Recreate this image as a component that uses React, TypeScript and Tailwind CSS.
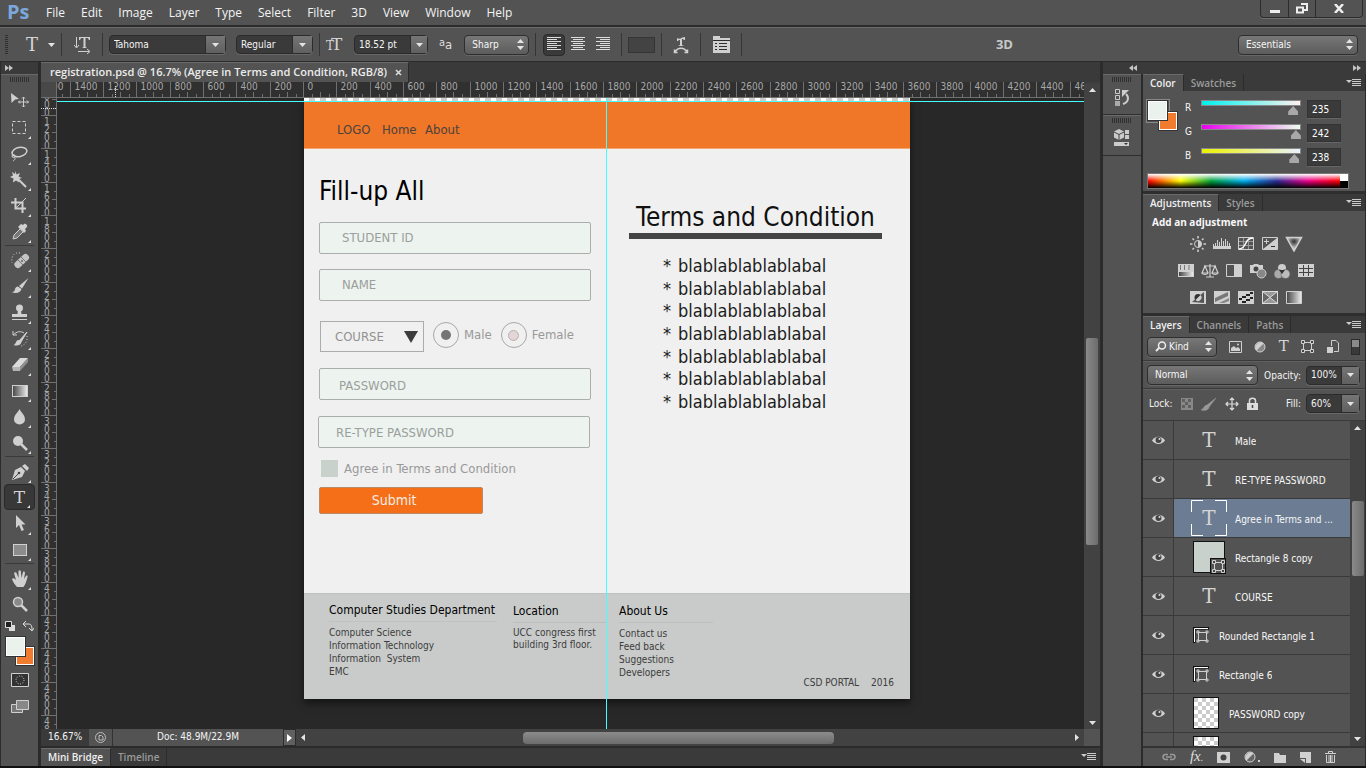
import type { ReactNode } from "react";

const MENUS = ["File", "Edit", "Image", "Layer", "Type", "Select", "Filter", "3D", "View", "Window", "Help"];

/* ---------- shared drawing helpers ---------- */

function Svg({ w = 24, h = 24, children, className = "" }: { w?: number; h?: number; children: ReactNode; className?: string }) {
  return (
    <svg width={w} height={h} viewBox={`0 0 ${w} ${h}`} fill="none" aria-hidden="true" className={`shrink-0 ${className}`}>
      {children}
    </svg>
  );
}

const L = "#d0d0d0";
const D = "#2e2e2e";

function TypeGlyph({ className = "text-[18px]" }: { className?: string }) {
  return <span className={`font-['DejaVu_Serif',serif] leading-none text-[#d4d4d4] ${className}`}>T</span>;
}

function DownArrow() {
  return <Svg w={7} h={4}><path d="M0 0h7L3.500 4z" fill="#e4e4e4" /></Svg>;
}

function UpDown() {
  return <Svg w={7} h={11}><path d="M3.500 0L7 4H0zM0 7h7L3.500 11z" fill="#e4e4e4" /></Svg>;
}

function Grip({ className = "" }: { className?: string }) {
  return (
    <Svg w={20} h={5} className={className}>
      {Array.from({ length: 10 }, (_, i) => <path key={i} d={`M${i * 2 + 0.5} 0v5`} stroke="#303030" />)}
    </Svg>
  );
}

function DoubleChevron({ left = false }: { left?: boolean }) {
  return (
    <Svg w={8} h={6}>
      <path d={left ? "M4 0v6L0 3zM8 0v6L4 3z" : "M0 0v6l4-3zM4 0v6l4-3z"} fill="#c4c4c4" />
    </Svg>
  );
}

function PanelMenu() {
  return (
    <button aria-label="Panel menu" className="mr-1 ml-auto flex items-center">
      <Svg w={15} h={10}>
        <path d="M0 2h6L3 5z" fill="#ccc" />
        <path d="M6 1.500h9M6 3.500h9M6 5.500h9M6 7.500h9" stroke="#ccc" />
      </Svg>
    </button>
  );
}

/* ---------- form controls of the options bar and panels ---------- */

function Combo({ value, label, className, arrow = "w-[20px]" }: { value: string; label: string; className: string; arrow?: string }) {
  return (
    <div className={`flex h-[19px] items-stretch rounded-sm border border-[#2b2b2b] bg-[#3a3a3a] shadow-[0_1px_0_#676767] ${className}`}>
      <select aria-label={label} className="min-w-0 flex-1 appearance-none bg-transparent pl-1 text-[10px] leading-4 text-[#f4f4f4] outline-none">
        <option>{value}</option>
      </select>
      <span className={`flex items-center justify-center border-l border-[#2b2b2b] bg-linear-to-b from-[#757575] to-[#606060] ${arrow}`}>
        <DownArrow />
      </span>
    </div>
  );
}

function Stepper({ value, label, className, icon }: { value: string; label: string; className: string; icon?: ReactNode }) {
  return (
    <div className={`flex h-5 items-center rounded-sm border border-[#2e2e2e] bg-linear-to-b from-[#777] to-[#5c5c5c] pr-1 pl-[7px] shadow-[0_1px_0_#676767] ${className}`}>
      {icon}
      <select aria-label={label} className="min-w-0 flex-1 appearance-none bg-transparent text-[10px] leading-4 text-[#f6f6f6] outline-none">
        <option>{value}</option>
      </select>
      <UpDown />
    </div>
  );
}

/* ---------- top bars ---------- */

function MenuBar() {
  return (
    <header className="flex h-[27px] shrink-0 items-start border-b-2 border-[#2c2c2c] bg-[#535353] pl-[7px]">
      <div className="w-[30px] font-['Open_Sans',sans-serif] text-[20px] leading-[24px] font-bold text-[#7ba7db]">Ps</div>
      <nav className="flex gap-4 pl-[9px] font-['Open_Sans',sans-serif] text-[12px] leading-[26px] text-[#f4f4f4]">
        {MENUS.map((m) => <button key={m}>{m}</button>)}
      </nav>
      <div className="mr-[3px] ml-auto flex h-[18px] rounded-b-sm border border-t-0 border-[#2c2c2c] shadow-[0_1px_0_#707070]">
        <button aria-label="Minimize" className="flex w-7 items-center justify-center border-r border-[#2c2c2c]">
          <Svg w={10} h={10}><path d="M0 6h10v3H0z" fill="#eee" /></Svg>
        </button>
        <button aria-label="Restore" className="flex w-[27px] items-center justify-center border-r border-[#2c2c2c]">
          <Svg w={12} h={11}><path d="M5 1h6v6H8M1 4.500h6v5H1z" stroke="#eee" strokeWidth="2" /></Svg>
        </button>
        <button aria-label="Close" className="flex w-[46px] items-center justify-center">
          <Svg w={10} h={9}><path d="M1 0l8 9M9 0L1 9" stroke="#eee" strokeWidth="2.500" /></Svg>
        </button>
      </div>
    </header>
  );
}

function Sep() {
  return <div className="h-[23px] w-px shrink-0 bg-[#353535]" />;
}

function AlignIcon({ kind }: { kind: "left" | "center" | "right" }) {
  return (
    <Svg w={15} h={15}>
      {Array.from({ length: 7 }, (_, i) => {
        const len = i % 2 ? 10 : 14;
        const x = kind === "left" ? 0 : kind === "center" ? (14 - len) / 2 : 14 - len;
        return <path key={i} d={`M${x} ${i * 2 + 0.5}h${len}`} stroke="#dcdcdc" />;
      })}
    </Svg>
  );
}

function OptionsBar() {
  return (
    <div className="flex h-[34px] shrink-0 items-center border-t border-[#6a6a6a] bg-[#535353] pr-[8px] pl-[5px]">
      <Svg w={5} h={20}>
        {Array.from({ length: 10 }, (_, i) => <path key={i} d={`M0 ${i * 2 + 0.5}h3`} stroke="#303030" />)}
      </Svg>
      <button aria-label="Type tool preset" className="ml-4 flex w-[32px] items-center gap-[10px]">
        <TypeGlyph /><DownArrow />
      </button>
      <div className="w-[3px]" />
      <Sep />
      <button aria-label="Toggle text orientation" className="ml-3 w-[28px]">
        <Svg w={18} h={18}>
          <path d="M2.500 1v10M0 9l2.500 3L5 9M4 15.500h11M13 13l3 2.500-3 2.500" stroke={L} />
          <path d="M5 1h11v3h-1l-1-2h-2.500v9l1.500 1H8l1.500-1V2H7L6 4H5z" fill={L} />
        </Svg>
      </button>
      <Sep />
      <Combo label="Font family" value="Tahoma" className="ml-[6px] w-[117px]" />
      <Combo label="Font style" value="Regular" className="ml-[10px] w-[77px]" />
      <div className="w-[6px]" />
      <Sep />
      <div className="ml-[6px] flex w-[22px] items-baseline">
        <TypeGlyph className="text-[12px] text-[#aaa]" /><TypeGlyph className="-ml-[3px] text-[17px]" />
      </div>
      <Combo label="Font size" value="18.52 pt" className="ml-[6px] w-[74px]" arrow="w-[17px]" />
      <div className="ml-[11px] flex items-end text-[13px] leading-4 text-[#ddd]">
        <span className="pb-1 text-[11px] leading-3">a</span><span>a</span>
      </div>
      <Stepper label="Anti-aliasing" value="Sharp" className="ml-3 w-[65px]" />
      <div className="w-[6px]" />
      <Sep />
      <div className="ml-[7px] flex gap-[1px]">
        <button aria-label="Left align text" className="flex h-[22px] w-[22px] items-center justify-center rounded-sm border border-[#2b2b2b] bg-[#3a3a3a]"><AlignIcon kind="left" /></button>
        <button aria-label="Center text" className="flex h-[22px] w-6 items-center justify-center"><AlignIcon kind="center" /></button>
        <button aria-label="Right align text" className="flex h-[22px] w-6 items-center justify-center"><AlignIcon kind="right" /></button>
      </div>
      <div className="w-[6px]" />
      <Sep />
      <button aria-label="Text color" className="mx-[6px] h-4 w-[27px] border border-[#353535] bg-[#434343]" />
      <Sep />
      <button aria-label="Warp text" className="mx-[11px] w-4">
        <Svg w={16} h={18}>
          <path d="M4 2c3 2 5-1 8-1v3h-1c-.5-1-1-1-2-1v6l2 1H5l2-1V4C6 4 5.500 4 5 5H4z" fill={L} />
          <path d="M2 16c3-5 9-5 12 0M1.500 13.500v3h3M14.500 13.500v3h-3" stroke={L} strokeWidth="1.500" />
        </Svg>
      </button>
      <Sep />
      <button aria-label="Toggle Character and Paragraph panels" className="mx-[12px] w-4">
        <Svg w={17} h={17}>
          <path d="M0 0h7v2h10v15H0z" fill={L} />
          <path d="M0 4.500h17M2 7.500h2m2 0h8M2 10.500h2m2 0h8M2 13.500h2m2 0h8" stroke={D} />
        </Svg>
      </button>
      <Sep />
      <button aria-label="3D" className="ml-auto font-['Open_Sans',sans-serif] text-[13px] font-bold text-[#c8c8c8]">3D</button>
      <Stepper label="Workspace" value="Essentials" className="ml-[225px] w-[120px]" />
    </div>
  );
}

/* ---------- tool box ---------- */

type Tool = { name: string; icon: ReactNode; fly?: boolean; active?: boolean };

const G1: Tool[] = [
  { name: "Move", fly: false, icon: <><path d="M3 4l8 6-4 .5L3.500 14z" fill={L} /><path d="M15.500 8v10M10.500 13h10M14 9.500l1.500-1.500L17 9.500M14 16.500l1.500 1.500 1.500-1.500M12 11.500L10.500 13l1.500 1.500M19 11.500l1.500 1.500-1.500 1.500" stroke={L} /></> },
  { name: "Rectangular Marquee", icon: <rect x="4.500" y="6.500" width="13" height="12" stroke={L} strokeDasharray="3 2" /> },
  { name: "Lasso", icon: <><ellipse cx="11.500" cy="11" rx="7.500" ry="4.500" transform="rotate(-12 11.500 11)" stroke={L} strokeWidth="1.500" /><circle cx="5.500" cy="15" r="1.500" stroke={L} /><path d="M6 16c2 1 1 3-1 4" stroke={L} /></> },
  { name: "Magic Wand", icon: <><path d="M7.500 4l1 3.500L12 6l-1.500 3.500L14 11l-3.500 1 .5 3.500-3-2-3 2 .5-4L2 10l3-1.500L4 5l3 2z" fill={L} /><path d="M10 12l8 8" stroke={L} strokeWidth="2" /></> },
  { name: "Crop", icon: <><path d="M7.500 5v10.500H18M3 9.500h11.500V20" stroke={L} strokeWidth="2" /><path d="M8 15L18 5" stroke={L} /></> },
  { name: "Eyedropper", icon: <><path d="M13 9l3 3-7 7-4 1 1-4z" stroke={L} fill="#777" /><path d="M13 5l2 1 1-1c1-1 4 1 3 3l-2 2 1 2-2 2-6-6z" fill={L} /></> },
];
const G2: Tool[] = [
  { name: "Spot Healing Brush", icon: <><rect x="5" y="10" width="17" height="7" rx="3" transform="rotate(-43 13 13)" fill="#c4c4c4" /><path d="M10 12l5 5M13 9l5 5" stroke="#777" /><path d="M12 5C6 4 3 8 4 15" stroke={L} strokeDasharray="1 2" /><circle cx="14" cy="13" r="1" fill="#666" /></> },
  { name: "Brush", icon: <><path d="M20.500 4L14 14.500 11 12z" fill={L} /><path d="M10 12.500l3.500 2.500c-1 4-6 5-10 3 3 0 3-1 3.500-3 .5-1.500 1.500-2.500 3-2.500z" fill={L} /></> },
  { name: "Clone Stamp", icon: <><circle cx="11.500" cy="8" r="3.500" fill={L} /><path d="M10 10h3l.5 4H19v3H4v-3h5.500z" fill={L} /><path d="M4 19.500h15" stroke={L} /></> },
  { name: "History Brush", icon: <><path d="M19 6l-6 10-2-1z" fill={L} stroke={L} /><path d="M10.500 14l3 2c-1 4-5 4-8 3 3-1 2-5 5-5z" fill={L} /><path d="M5 9c4-4 8-4 11-2M5 5v4h4" stroke={L} /><path d="M19 10c1 5-2 9-6 10" stroke={L} strokeDasharray="1 2" /></> },
  { name: "Eraser", icon: <><path d="M4 15l8-9h8l-8 9z" fill="#dadada" /><path d="M4 15h8v4H5z" fill="#b4b4b4" /><path d="M12 15l8-9v4l-8 9z" fill="#909090" /></> },
  { name: "Gradient", icon: <rect x="4.500" y="7.500" width="15" height="11" fill="url(#tool-gradient)" stroke={L} /> },
  { name: "Blur", icon: <path d="M11.500 5c2 4 5.500 6 5.500 10.500a5.500 5 0 0 1-11 0C6 11 9.500 9 11.500 5z" fill={L} /> },
  { name: "Dodge", icon: <><circle cx="10" cy="11" r="5" fill={L} /><path d="M13 14l6 6" stroke={L} strokeWidth="2.500" /></> },
];
const G3: Tool[] = [
  { name: "Pen", icon: <><path d="M4 21l3-10 6-3 4 4-3 6z" fill={L} /><path d="M5 20l6-6" stroke="#444" /><circle cx="11" cy="14" r="1.300" fill="#444" /><path d="M14 7l3-2 4 4-2 3z" fill={L} /></> },
  { name: "Horizontal Type", active: true, icon: null },
  { name: "Path Selection", icon: <path d="M8 4v13l3-3 2.500 6 2.500-1-2.500-5.500h4z" fill={L} /> },
  { name: "Rectangle", icon: <rect x="5.500" y="7.500" width="13" height="11" fill="#8c8c8c" stroke={L} /> },
];
const G4: Tool[] = [
  { name: "Hand", icon: <path d="M9 21c-2-2-4-5-5-8 1-1 2-1 4 1L6 7c1-1 2-1 2.500 0l2 5V5c1-1 2-1 2.300 0l.7 7 1.500-6c1-1 2 0 2 1l-1 6 2-3c1-1 2 0 1.500 1-1 4-2 7-4 10z" fill={L} /> },
  { name: "Zoom", fly: false, icon: <><circle cx="10" cy="10" r="4.500" fill="#8a8a8a" stroke={L} strokeWidth="1.500" /><path d="M13 13l6 6" stroke={L} strokeWidth="2.500" /></> },
];

function ToolGroup({ tools }: { tools: Tool[] }) {
  return (
    <div className="flex w-full flex-col items-center">
      {tools.map((t) => (
        <button
          key={t.name}
          aria-label={t.name}
          className={`relative flex h-[26px] w-[31px] items-center justify-center ${t.active ? "rounded-sm border border-[#2a2a2a] bg-[#383838]" : ""}`}
        >
          {t.icon ? <Svg>{t.icon}</Svg> : <TypeGlyph className="text-[17px]" />}
          {t.fly !== false && (
            <Svg w={3} h={3} className="absolute right-1 bottom-px"><path d="M3 0v3H0z" fill="#ddd" /></Svg>
          )}
        </button>
      ))}
    </div>
  );
}

function ToolSep() {
  return <div className="my-px h-px w-[29px] bg-[#3a3a3a]" />;
}

function Swatches({ className = "" }: { className?: string }) {
  return (
    <div className={`relative ${className}`}>
      <div className="absolute right-0 bottom-0 h-[18px] w-[18px] border border-white bg-[#f17c30] outline outline-[#333]" />
      <div className="absolute top-0 left-0 h-[19px] w-[19px] border border-white bg-[#ebf2ee] outline outline-[#333]" />
    </div>
  );
}

function Toolbox() {
  return (
    <aside className="flex w-[37px] shrink-0 flex-col bg-[#535353]">
      <div className="flex h-[12px] items-center bg-[#3a3a3a] pl-1"><DoubleChevron /></div>
      <div className="flex flex-col items-center border-t border-[#6a6a6a]">
        <Grip className="mt-[2px] mb-[6px]" />
        <ToolGroup tools={G1} /><ToolSep />
        <ToolGroup tools={G2} /><ToolSep />
        <ToolGroup tools={G3} /><ToolSep />
        <ToolGroup tools={G4} />
        <div className="mt-1 flex w-[29px] justify-between">
          <Svg w={11} h={11}><path d="M4 4h6v6H4z" fill="#ddd" /><path d="M.5.5h6v6h-6z" fill="#222" stroke="#ddd" /></Svg>
          <Svg w={11} h={11}><path d="M1 3h4c3 0 4 1 4 6M3 0L0 3l3 3M6 7l3 3 2-3" stroke="#ddd" /></Svg>
        </div>
        <Swatches className="mt-[5px] h-[28px] w-[28px]" />
        <button aria-label="Quick mask mode" className="mt-2">
          <Svg w={18} h={14}><path d="M.5.5h17v13H.5z" fill="#333" stroke={L} /><circle cx="9" cy="7" r="4" stroke={L} strokeDasharray="1 1.500" /></Svg>
        </button>
        <button aria-label="Screen mode" className="mt-[13px]">
          <Svg w={18} h={14}><path d="M.5 4.500h11v8H.5z" fill="#777" stroke={L} /><path d="M5.500.5h12v9h-12z" fill="#888" stroke={L} /></Svg>
        </button>
      </div>
    </aside>
  );
}

/* ---------- rulers: one document unit is a sixth of a pixel ---------- */

const STEP = 100 / 3;

function HRuler() {
  const marks = Array.from({ length: 32 }, (_, i) => i - 8);
  return (
    <svg height="15" className="block w-full bg-[#303030] text-[10px]" role="img" aria-label="Horizontal ruler">
      {marks.map((i) => {
        const x = Math.round(247 + i * STEP) - 0.5;
        return (
          <g key={i}>
            <path d={`M${x} 0v15M${Math.round(x + STEP / 4) + 0.5} 12v3M${Math.round(x + STEP / 2) + 0.5} 10v5M${Math.round(x + (STEP * 3) / 4) + 0.5} 12v3`} stroke="#707070" />
            <text x={x + 4} y="8" fill="#a8a8a8">{Math.abs(i * 200)}</text>
          </g>
        );
      })}
      <path d="M58.500 4v11" stroke="#ddd" strokeDasharray="1 1" />
    </svg>
  );
}

function VRuler() {
  const marks = Array.from({ length: 20 }, (_, i) => i + 5);
  return (
    <svg width="16" className="block h-full bg-[#303030] text-[10px]" role="img" aria-label="Vertical ruler">
      {marks.map((i) => {
        const y = Math.round(17 + (i - 6) * STEP) + 0.5;
        return (
          <g key={i}>
            <path d={`M0 ${y}h16M13 ${Math.round(y + STEP / 4) + 0.5}h3M11 ${Math.round(y + STEP / 2) + 0.5}h5M13 ${Math.round(y + (STEP * 3) / 4) + 0.5}h3`} stroke="#707070" />
            {String(i * 200).split("").map((c, k) => (
              <text key={k} x="3" y={y + 9 + k * 8} fill="#a8a8a8">{c}</text>
            ))}
          </g>
        );
      })}
      <path d="M15.500 0v2000" stroke="#707070" />
      <path d="M0 10.500h16" stroke="#ddd" strokeDasharray="1 1" />
    </svg>
  );
}

/* ---------- the edited document ---------- */

const FIELD = "block h-8 w-[272px] rounded-xs border border-[#acaead] bg-[#edf3ef] text-[13px] text-[#8f9592] placeholder:text-[#9a9f9c] outline-none";

function RegistrationForm() {
  return (
    <form className="flex w-[302px] flex-col pt-[26px] pl-[15px] text-[13px] text-[#999]">
      <h1 className="text-[26px] leading-8 text-black">Fill-up All</h1>
      <input aria-label="Student ID" placeholder="STUDENT ID" className={`${FIELD} mt-[15px] pb-[2px] pl-[22px]`} />
      <input aria-label="Name" placeholder="NAME" className={`${FIELD} mt-[15px] pb-[2px] pl-[22px]`} />
      <div className="mt-5 flex h-[31px] items-center">
        <div className="ml-px flex h-[31px] w-[104px] items-center border border-[#acacac] pr-[5px] pl-[14px]">
          <select aria-label="Course" className="min-w-0 flex-1 appearance-none bg-transparent text-[#909090] outline-none"><option>COURSE</option></select>
          <Svg w={14} h={12}><path d="M0 0h14L7 12z" fill="#3c3c3c" /></Svg>
        </div>
        <label className="ml-[9px] flex items-center gap-[5px] pb-[3px]">
          <input type="radio" name="sex" defaultChecked className="flex h-[26px] w-[26px] appearance-none items-center justify-center rounded-full border border-[#a8a8a8] before:h-[10px] before:w-[10px] before:rounded-full before:bg-[#757575]" />
          Male
        </label>
        <label className="ml-[9px] flex items-center gap-[5px] pb-[3px]">
          <input type="radio" name="sex" className="flex h-[26px] w-[26px] appearance-none items-center justify-center rounded-full border border-[#a8a8a8] before:h-[11px] before:w-[11px] before:rounded-full before:border before:border-[#b8b0b0] before:bg-[#e4d6d6]" />
          Female
        </label>
      </div>
      <input aria-label="Password" placeholder="PASSWORD" className={`${FIELD} mt-4 pt-[3px] pl-[19px]`} />
      <input aria-label="Re-type password" placeholder="RE-TYPE PASSWORD" className={`${FIELD} mt-4 -ml-px pl-[17px]`} />
      <label className="mt-3 flex h-[17px] items-center gap-[6px] pl-[2px]">
        <input type="checkbox" className="h-[17px] w-[17px] appearance-none bg-[#c8d1cc]" />
        Agree in Terms and Condition
      </label>
      <button type="button" className="mt-[10px] h-[27px] w-[164px] rounded-xs border border-[#b98a68] bg-[#f56f18] pr-[14px] pb-[2px] text-[14px] leading-6 text-[#f4ece6]">Submit</button>
    </form>
  );
}

function DocumentPage() {
  return (
    <article className="w-[606px] shrink-0 bg-[#f0f0f0] shadow-[0_4px_8px_#0008]">
      <div className="h-1 bg-[repeating-linear-gradient(90deg,#fff_0_5px,#ccc_5px_11px)]" />
      <nav className="flex h-[47px] border-b border-[#f3a672] bg-[#f07628] pt-[18px] pl-[33px] text-[13px] leading-5 text-[#4b433e]">
        <a href="#logo" className="w-[45px]">LOGO</a>
        <a href="#home" className="w-[43px]">Home</a>
        <a href="#about">About</a>
      </nav>
      <div className="flex h-[444px]">
        <RegistrationForm />
        <section className="ml-[23px] w-[253px] pt-[52px]">
          <h2 className="text-center text-[26px] leading-8 whitespace-nowrap text-[#111]">Terms and Condition</h2>
          <div className="h-[6px] bg-[#444]" />
          <ul className="mt-4 flex h-[158px] flex-col justify-between pl-[34px] text-[18px] leading-[22px] text-[#1c1c1c]">
            {Array.from({ length: 7 }, (_, i) => <li key={i} className="flex"><span className="w-[15px]">*</span>blablablablablabal</li>)}
          </ul>
        </section>
      </div>
      <footer className="flex h-[106px] border-t border-[#bfc1c0] bg-[#c9cbca] pt-[8px] pl-[25px] text-[10px] leading-[13px] text-[#3c3c3c]">
        <section className="w-[184px] whitespace-nowrap">
          <h3 className="mr-4 border-b border-[#c0c2c1] pb-[3px] text-[12px] leading-4 text-black">Computer Studies Department</h3>
          <ul className="mt-1">
            <li>Computer Science</li><li>Information Technology</li><li className="whitespace-pre">Information  System</li><li>EMC</li>
          </ul>
        </section>
        <section className="w-[106px]">
          <h3 className="mr-3 border-b border-[#bdbfbe] pt-px pb-[3px] text-[12px] leading-4 text-black">Location</h3>
          <p className="mt-1 leading-3 whitespace-nowrap">UCC congress first<br />building 3rd floor.</p>
        </section>
        <section className="w-[94px]">
          <h3 className="border-b border-[#bdbfbe] pt-px pb-[3px] text-[12px] leading-4 text-black">About Us</h3>
          <ul className="mt-1">
            <li>Contact us</li><li>Feed back</li><li>Suggestions</li><li>Developers</li>
          </ul>
        </section>
        <p className="mr-4 mb-[10px] ml-auto flex gap-3 self-end"><span>CSD PORTAL</span><span>2016</span></p>
      </footer>
    </article>
  );
}

function DocumentWindow() {
  return (
    <main className="flex min-w-0 flex-1 flex-col bg-[#2b2b2b]">
      <div className="flex h-5 shrink-0 bg-[#3a3a3a]">
        <div className="flex items-center gap-2 border-t border-r border-t-[#6a6a6a] border-r-[#2b2b2b] bg-[#535353] pr-[6px] pl-[9px] font-['Open_Sans',sans-serif] text-[11px] font-semibold whitespace-nowrap text-[#ececec]">
          <h1>registration.psd @ 16.7% (Agree in Terms and Condition, RGB/8)</h1>
          <button aria-label="Close document"><Svg w={7} h={7}><path d="M1 1l5 5M6 1L1 6" stroke="#ddd" strokeWidth="1.500" /></Svg></button>
        </div>
      </div>
      <div className="flex h-4 shrink-0">
        <div className="h-4 w-4 shrink-0 border-r border-b border-[#707070] bg-[#484848]" />
        <div className="min-w-0 flex-1 overflow-hidden border-b border-[#707070]"><HRuler /></div>
        <div className="w-4 shrink-0 bg-[#3f3f3f]" />
      </div>
      <div className="flex min-h-0 flex-1">
        <div className="w-4 shrink-0 overflow-hidden"><VRuler /></div>
        <div className="relative flex min-w-0 flex-1 items-start overflow-hidden bg-[#282828] pl-[247px]">
          <DocumentPage />
          <div className="absolute top-[3px] left-0 h-px w-full bg-[#44ffff]" />
          <div className="absolute top-0 left-[549px] h-full w-px bg-[#44ffff]" />
        </div>
        <div className="-mt-[14px] flex w-4 shrink-0 flex-col items-center bg-[#424242] py-1">
          <Svg w={7} h={4}><path d="M3.500 0L7 4H0z" fill="#e4e4e4" /></Svg>
          <div className="flex-[244]" />
          <div className="w-[12px] flex-[206] rounded-xs bg-linear-to-r from-[#8a8a8a] to-[#6c6c6c]" />
          <div className="flex-[175]" />
          <DownArrow />
        </div>
      </div>
      <div className="flex h-[17px] shrink-0 items-stretch bg-[#424242] text-[10px] leading-4 text-[#f4f4f4]">
        <div className="w-12 bg-[#3a3a3a] pl-[7px]">16.67%</div>
        <div className="flex w-6 items-center justify-center border-r border-[#333] bg-[#535353]">
          <Svg w={11} h={11}><circle cx="5.500" cy="5.500" r="5" stroke="#bbb" /><path d="M4 8V3.500h2.500L8 5v3z" stroke="#bbb" /></Svg>
        </div>
        <div className="w-[170px] bg-[#535353] text-center">Doc: 48.9M/22.9M</div>
        <button aria-label="Status info" className="flex w-[13px] items-center justify-center border border-[#2b2b2b] bg-[#606060]"><Svg w={5} h={8}><path d="M0 0v8l5-4z" fill="#fff" /></Svg></button>
        <div className="flex flex-1 items-center px-[5px]">
          <Svg w={4} h={7}><path d="M4 0v7L0 3.500z" fill="#e4e4e4" /></Svg>
          <div className="flex-[217]" />
          <div className="h-3 flex-[311] rounded-sm bg-linear-to-b from-[#8c8c8c] to-[#6c6c6c]" />
          <div className="flex-[240]" />
          <Svg w={4} h={7}><path d="M0 0v7l4-3.500z" fill="#e4e4e4" /></Svg>
        </div>
        <div className="w-4 bg-[#535353]" />
      </div>
      <div className="mt-[2px] flex h-[18px] shrink-0 bg-[#3a3a3a] font-['Open_Sans',sans-serif] text-[10px] leading-[17px] font-semibold">
        <button className="border-t border-r border-t-[#6a6a6a] border-r-[#2b2b2b] bg-[#535353] px-[7px] text-[#f0f0f0]">Mini Bridge</button>
        <button className="border-r border-[#2b2b2b] px-[7px] text-[#9a9a9a]">Timeline</button>
        <PanelMenu />
      </div>
    </main>
  );
}

/* ---------- right-hand dock ---------- */

function IconDock() {
  return (
    <div className="w-[38px] shrink-0">
      <div className="flex h-[41px] flex-col items-center border-t border-b border-t-[#6a6a6a] border-b-[#2e2e2e]">
        <Grip className="mt-[2px]" />
        <button aria-label="History" className="mt-[6px]">
          <Svg w={16} h={19}>
            <path d="M1.500 1.500h4v4h-4zM1.500 7.500h4v4h-4z" stroke="#ccc" /><path d="M1 13h5v5H1z" fill="#aaa" />
            <path d="M9 16c6-2 6-7 3-10" stroke="#ccc" strokeWidth="2" /><path d="M8 9V2h7z" fill="#ccc" />
          </Svg>
        </button>
      </div>
      <div className="flex h-[41px] flex-col items-center border-t border-b border-t-[#6a6a6a] border-b-[#2e2e2e]">
        <Grip className="mt-[2px]" />
        <button aria-label="Properties" className="mt-[6px]">
          <Svg w={16} h={18}>
            <path d="M5 0l5 2.500v6L5 11 0 8.500v-6z" fill="#ccc" /><path d="M0 3l5 2.500L10 3M5 5.500V11" stroke="#444" />
            <path d="M11 1h4v4h-4zM11 6h4v4h-4zM0 13h15v4H0z" fill="#ccc" /><path d="M10 14h4l-2 2z" fill="#333" />
          </Svg>
        </button>
      </div>
    </div>
  );
}

function Tabs({ items }: { items: string[] }) {
  return (
    <div className="flex h-[17px] shrink-0 bg-[#3a3a3a] font-['Open_Sans',sans-serif] text-[10px] leading-4 font-semibold">
      {items.map((t, i) => (
        <button key={t} className={i === 0 ? "border-t border-r border-t-[#6a6a6a] border-r-[#2b2b2b] bg-[#535353] px-[7px] text-[#f0f0f0]" : "border-r border-[#2b2b2b] px-[7px] text-[#9a9a9a]"}>{t}</button>
      ))}
      <PanelMenu />
    </div>
  );
}

const CHANNELS = [
  { n: "R", v: 235, bar: "bg-[linear-gradient(90deg,#00f2ee,#fff2ee)]" },
  { n: "G", v: 242, bar: "bg-[linear-gradient(90deg,#eb00ee,#ebffee)]" },
  { n: "B", v: 238, bar: "bg-[linear-gradient(90deg,#ebf200,#ebf2ff)]" },
];

function ColorPanel() {
  return (
    <section className="border-b-[3px] border-[#2e2e2e]">
      <Tabs items={["Color", "Swatches"]} />
      <div className="px-1 pt-[9px] pb-[2px]">
        <div className="flex">
          <div className="mr-[9px] h-[22px] w-[22px] outline outline-[#888]"><Swatches className="mt-px ml-px h-[29px] w-[29px]" /></div>
          <div className="flex flex-1 flex-col gap-1 pl-[7px]">
            {CHANNELS.map((c) => (
              <div key={c.n} className="flex h-5 items-start">
                <label htmlFor={`ch-${c.n}`} className="w-4 text-[10px] leading-4">{c.n}</label>
                <div className="w-[100px]">
                  <div className={`h-[6px] border border-[#888] ${c.bar}`} />
                  <input id={`ch-${c.n}`} type="range" min={0} max={255} defaultValue={c.v} className="-ml-[5px] block h-[9px] w-[110px] appearance-none bg-transparent [&::-webkit-slider-thumb]:h-[9px] [&::-webkit-slider-thumb]:w-[10px] [&::-webkit-slider-thumb]:appearance-none [&::-webkit-slider-thumb]:bg-[#a8a8a8] [&::-webkit-slider-thumb]:[clip-path:polygon(50%_0,100%_60%,100%_100%,0_100%,0_60%)]" />
                </div>
                <input aria-label={`${c.n} value`} defaultValue={c.v} className="ml-[6px] h-[18px] w-[34px] border border-[#333] bg-[#3a3a3a] pl-1 text-[10px] text-white shadow-[0_1px_0_#666] outline-none" />
              </div>
            ))}
          </div>
        </div>
        <div className="mt-[5px] flex h-4 w-[202px] border border-[#777]">
          <div className="flex-1 bg-[linear-gradient(#fff,#fff0_50%,#0000_50%,#000),linear-gradient(90deg,#f00,#ff0_17%,#00a03c_33%,#00aeef_50%,#2b2b90_67%,#ec008c_83%,#f00)]" />
          <div className="w-2 bg-linear-to-b from-white from-50% to-black to-50%" />
        </div>
      </div>
    </section>
  );
}

const box = <path d="M1.500 1.500h15v12h-15z" stroke={L} />;
const ADJ: [string, ReactNode][][] = [
  [
    ["Brightness/Contrast", <><circle cx="9" cy="8" r="3.500" stroke={L} /><path d="M9 4.500a3.500 3.500 0 0 1 0 7z" fill={L} /><path d="M9 0v2.500M9 13.500V16M1 8h2.500M14.500 8H17M3.500 2.500l1.500 1.500M13 12l1.500 1.500M14.500 2.500L13 4M5 12l-1.500 1.500" stroke={L} strokeWidth="1.500" /></>],
    ["Levels", <><path d="M0 10h18v3H0z" fill={L} /><path d="M.5 10V8M2.500 10V7M4.500 10V4M6.500 10V6M8.500 10V2M10.500 10V5M12.500 10V3M14.500 10V5M16.500 10V7" stroke={L} /></>],
    ["Curves", <>{box}<path d="M6.500 2v11M11.500 2v11M2 5.500h14M2 9.500h14" stroke="#999" /><path d="M2 13c8 0 5-11 14-11" stroke="#fff" strokeWidth="1.500" /></>],
    ["Exposure", <>{box}<path d="M16 2v11H2z" fill={L} /><path d="M3 5.500h5M5.500 3v5" stroke={L} /><path d="M10 10.500h4" stroke={D} /></>],
    ["Vibrance", <path d="M1.500 1.500h15L9 15z" fill="url(#vib)" stroke={L} strokeWidth="1.500" />],
  ],
  [
    ["Hue/Saturation", <><path d="M1 1h16v13H1z" fill={L} /><path d="M3.500 2v5M7.500 2v5M12 2v5" stroke="#777" /><path d="M2 9h14v4H2z" fill="url(#tool-gradient)" /></>],
    ["Color Balance", <path d="M9 1v13M5 14h8M3 3h12M4 3L1 10h6zM14 3l-3 7h6zM1 10c1 2 5 2 6 0M11 10c1 2 5 2 6 0" stroke={L} strokeWidth="1.200" />],
    ["Black & White", <>{box}<path d="M9 2h8v12H9z" fill={L} /></>],
    ["Photo Filter", <><path d="M1 2h3l1-1h4l1 1h4v8H1z" fill={L} /><circle cx="7" cy="6" r="2.500" fill="#444" /><circle cx="12.500" cy="10.500" r="4.500" fill="#888" stroke={L} /></>],
    ["Channel Mixer", <><circle cx="9" cy="5" r="4" fill="#ccc" /><circle cx="5.500" cy="11" r="4.500" fill="#aaa" stroke="#555" strokeWidth=".5" /><circle cx="12.500" cy="11" r="4.500" fill="#bbb" stroke="#555" strokeWidth=".5" /><path d="M6 7h6l-3 4z" fill="#333" /></>],
    ["Color Lookup", <><path d="M1 1h16v13H1z" fill={L} /><path d="M2 5.500h14M2 9.500h14M6.500 2v11M11.500 2v11" stroke="#444" /></>],
  ],
  [
    ["Invert", <><path d="M1 1h16v13H1z" fill={L} /><path d="M3 12L15 2v11z" fill="#555" /><circle cx="9" cy="7.500" r="3.500" fill="#333" /><path d="M6.500 10a3.500 3.500 0 0 0 5-5z" fill={L} /></>],
    ["Posterize", <><path d="M1 1h16v13H1z" fill={L} /><path d="M2 8L15 2v4L2 12z" fill="#777" /><path d="M6 13l10-5v3l-5 2z" fill="#888" /></>],
    ["Threshold", <><path d="M1 1h16v13H1z" fill={L} /><path d="M2 8h3V6h4V4h4V2h3v2h-3v2h-4v2H5v2H2zM5 11h4V9h4V7h3v2h-3v2h-4v2H5z" fill="#222" /></>],
    ["Selective Color", <><path d="M1 1h16v13H1z" fill="#999" /><path d="M1 1l8 6.500L1 14zM17 1L9 7.500l8 6.500z" fill="#666" /><path d="M1.500 1.500h15v12h-15zM1 1l16 13M17 1L1 14" stroke="#ddd" /></>],
    ["Gradient Map", <path d="M1.500 1.500h15v12h-15z" fill="url(#tool-gradient)" stroke={L} />],
  ],
];

function AdjustmentsPanel() {
  return (
    <section className="border-b-[3px] border-[#2e2e2e]">
      <Tabs items={["Adjustments", "Styles"]} />
      <h2 className="pt-1 pb-px pl-[9px] font-['Open_Sans',sans-serif] text-[10px] leading-[14px] font-bold text-[#f8f8f8]">Add an adjustment</h2>
      <div className="flex flex-col pr-4 pb-[2px]">
        {ADJ.map((row, i) => (
          <div key={i} className="flex h-[27px] items-center justify-center">
            {row.map(([name, icon]) => (
              <button key={name} aria-label={name} className="flex w-6 justify-center"><Svg w={18} h={16}>{icon}</Svg></button>
            ))}
          </div>
        ))}
      </div>
    </section>
  );
}

function ShapeIcon() {
  return (
    <Svg w={13} h={13}>
      <path d="M2.500 2.500h8v8h-8z" stroke={L} />
      <path d="M.5.5h3v3h-3zM9.500.5h3v3h-3zM.5 9.500h3v3h-3zM9.500 9.500h3v3h-3z" fill="#444" stroke={L} />
    </Svg>
  );
}

const CHECKER = "bg-[repeating-conic-gradient(#fff_0_25%,#ccc_0_50%)] bg-[length:8px_8px]";

type Layer = { name: string; kind: "type" | "rect" | "shape" | "pixel"; selected?: boolean };
const LAYERS: Layer[] = [
  { name: "Male", kind: "type" },
  { name: "RE-TYPE PASSWORD", kind: "type" },
  { name: "Agree in Terms and ...", kind: "type", selected: true },
  { name: "Rectangle 8 copy", kind: "rect" },
  { name: "COURSE", kind: "type" },
  { name: "Rounded Rectangle 1", kind: "shape" },
  { name: "Rectangle 6", kind: "shape" },
  { name: "PASSWORD copy", kind: "pixel" },
  { name: "", kind: "pixel" },
];

function LayerThumb({ layer }: { layer: Layer }) {
  if (layer.kind === "type") {
    return (
      <span className="relative ml-[17px] flex h-9 w-9 items-center justify-center">
        <TypeGlyph className="text-[20px]" />
        {layer.selected && (
          <Svg w={36} h={36} className="absolute inset-0"><path d="M.5 12V.5H12M24 .5h11.500V12M35.500 24v11.500H24M12 35.500H.5V24" stroke="#fff" /></Svg>
        )}
      </span>
    );
  }
  if (layer.kind === "rect") {
    return (
      <span className="relative mr-[2px] ml-[19px] flex h-8 w-8 items-end justify-end border border-[#111] bg-[#c8d1cc]">
        <span className="-mr-px -mb-px flex h-[14px] w-[14px] items-center justify-center bg-[#535353] outline outline-[#111]"><ShapeIcon /></span>
      </span>
    );
  }
  if (layer.kind === "shape") {
    return (
      <Svg w={16} h={16} className="mr-[2px] ml-[19px]">
        <path d="M0 0h16v2.500H2.500V16H0z" fill="#111" />
        <path d="M1.500 15V1.500H15" stroke="#fff" />
        <path d="M5.500 5.500h8v8h-8z" stroke={L} />
        <path d="M4 4h2v2H4zM13 4h2v2h-2zM4 13h2v2H4zM13 13h2v2h-2z" stroke={L} />
      </Svg>
    );
  }
  return <span className={`mr-[2px] ml-[19px] h-8 w-[26px] border border-[#111] ${CHECKER}`} />;
}

function Eye() {
  return (
    <Svg w={13} h={10}>
      <path d="M0 5.500C3 .5 10 .5 13 5.500 10 10 3 10 0 5.500z" fill="#d0d0d0" /><circle cx="6.500" cy="5" r="3" fill="#444" /><circle cx="7.500" cy="4" r="1" fill="#ddd" />
    </Svg>
  );
}

function LayersPanel() {
  return (
    <section className="flex min-h-0 flex-1 flex-col">
      <Tabs items={["Layers", "Channels", "Paths"]} />
      <div className="flex h-7 shrink-0 items-center border-b border-[#3a3a3a] pl-1">
        <Stepper label="Filter type" value="Kind" className="w-[70px]" icon={<Svg w={14} h={11}><circle cx="7" cy="4.500" r="3.500" stroke="#eee" strokeWidth="1.500" /><path d="M4 7l-3 3" stroke="#eee" strokeWidth="2" /></Svg>} />
        <div className="flex flex-1 items-center justify-between pr-[5px] pl-3">
          <button aria-label="Pixel layers"><Svg w={13} h={12}><path d="M.5.5h12v11H.5z" stroke={L} /><path d="M2 10V7l3-2 2 2 2-1 2 2v2z" fill={L} /><circle cx="9" cy="3.500" r="1" fill={L} /></Svg></button>
          <button aria-label="Adjustment layers"><Svg w={12} h={12}><circle cx="6" cy="6" r="5" fill="#888" stroke={L} /><path d="M9.500 2.500a5 5 0 0 0-7 7z" fill={L} /></Svg></button>
          <button aria-label="Type layers" className="flex"><TypeGlyph className="text-[15px]" /></button>
          <button aria-label="Shape layers"><ShapeIcon /></button>
          <button aria-label="Smart objects"><Svg w={12} h={13}><path d="M4.500 6V.5H9L11.500 3v8.500H7" stroke={L} /><path d="M0 7h6v6H0z" fill={L} /></Svg></button>
          <button aria-label="Toggle filtering" className="h-4 w-[9px] border border-[#2b2b2b] bg-linear-to-b from-[#8a8a8a] from-50% to-[#3a3a3a] to-50%" />
        </div>
      </div>
      <div className="flex h-7 shrink-0 items-center border-t border-b border-t-[#606060] border-b-[#3a3a3a] pr-[5px] pl-1 text-[10px]">
        <Stepper label="Blend mode" value="Normal" className="w-[111px]" />
        <span className="mr-[5px] ml-auto">Opacity:</span>
        <Combo label="Opacity" value="100%" className="w-[54px]" arrow="w-[18px]" />
      </div>
      <div className="flex h-7 shrink-0 items-center border-t border-[#606060] pr-[5px] pl-[6px] text-[10px]">
        <span className="w-[32px]">Lock:</span>
        <div className="flex items-center gap-2">
          <button aria-label="Lock transparency"><Svg w={12} h={12}><path d="M0 0h12v12H0z" fill="#888" /><path d="M1 1h3v3H1zM7 1h3v3H7zM4 4h3v3H4zM1 7h3v3H1zM7 7h3v3H7z" fill="#606060" /></Svg></button>
          <button aria-label="Lock pixels"><Svg w={16} h={14}><path d="M15 1L8 10 6 8zM6 8l2 2c0 3-4 4-8 3 3-1 3-5 6-5z" fill="#999" stroke="#999" strokeWidth=".5" /></Svg></button>
          <button aria-label="Lock position"><Svg w={14} h={14}><path d="M7 1v12M1 7h12M5 3l2-2 2 2M5 11l2 2 2-2M3 5L1 7l2 2M11 5l2 2-2 2" stroke="#ddd" strokeWidth="1.200" /></Svg></button>
          <button aria-label="Lock all"><Svg w={11} h={13}><path d="M2.500 6V3.500c0-3 6-3 6 0V6" stroke="#ddd" strokeWidth="1.500" /><path d="M0 6h11v7H0z" fill="#ddd" /><path d="M5.500 8v3" stroke="#444" strokeWidth="1.500" /></Svg></button>
        </div>
        <span className="mr-[5px] ml-auto">Fill:</span>
        <Combo label="Fill" value="60%" className="w-[54px]" arrow="w-[18px]" />
      </div>
      <div className="mt-[3px] flex min-h-0 flex-1 border-t border-[#3a3a3a]">
        <ul className="min-w-0 flex-1 overflow-hidden">
          {LAYERS.map((l, i) => (
            <li key={i} className="flex h-[39px] border-b border-[#3a3a3a]">
              <button aria-label="Toggle visibility" className="flex w-[31px] shrink-0 items-center justify-center border-r border-[#3a3a3a]">{l.name && <Eye />}</button>
              <div className={`flex min-w-0 flex-1 items-center gap-2 ${l.selected ? "bg-[#6b7c93]" : ""}`}>
                <LayerThumb layer={l} />
                <span className="truncate pt-[3px] text-[10px] text-[#f8f8f8]">{l.name}</span>
              </div>
            </li>
          ))}
        </ul>
        <div className="flex w-[15px] shrink-0 flex-col items-center bg-[#424242] py-[5px]">
          <Svg w={7} h={4}><path d="M3.500 0L7 4H0z" fill="#e4e4e4" /></Svg>
          <div className="flex-[71]" />
          <div className="w-3 flex-[75] rounded-xs bg-linear-to-r from-[#8a8a8a] to-[#6c6c6c]" />
          <div className="flex-[161]" />
          <DownArrow />
        </div>
      </div>
      <div className="flex h-5 shrink-0 items-center justify-between border-t-2 border-[#333] pr-[29px] pl-[19px]">
        <button aria-label="Link layers"><Svg w={14} h={8}><path d="M6 1.500H3.500a2.500 2.500 0 0 0 0 5H6M8 1.500h2.500a2.500 2.500 0 0 1 0 5H8M4 4h6" stroke="#999" strokeWidth="1.500" /></Svg></button>
        <button aria-label="Layer style" className="font-['Liberation_Serif',serif] text-[15px] leading-4 text-[#ddd] italic">fx<span className="text-[10px]">.</span></button>
        <button aria-label="Add mask"><Svg w={13} h={11}><path d="M0 0h13v11H0z" fill={L} /><circle cx="6.500" cy="5.500" r="3" fill="#444" /></Svg></button>
        <button aria-label="New adjustment layer"><Svg w={16} h={12}><circle cx="6" cy="6" r="5" fill="#666" stroke={L} /><path d="M9.500 2.500a5 5 0 0 0-7 7z" fill={L} /><path d="M14 9h2v2h-2z" fill={L} /></Svg></button>
        <button aria-label="New group"><Svg w={12} h={11}><path d="M0 1h5l1 2h6v8H0z" fill={L} /></Svg></button>
        <button aria-label="New layer"><Svg w={11} h={11}><path d="M0 0h11v11H6V6H0z" fill={L} /><path d="M0 7h5v4z" fill={L} /></Svg></button>
        <button aria-label="Delete layer"><Svg w={11} h={12}><path d="M0 2.500h11M3.500 2V.5h4V2" stroke={L} /><path d="M1.500 4v7.500h8V4M4 4v7M5.500 4v7M7 4v7" stroke={L} /></Svg></button>
      </div>
    </section>
  );
}

export default function App() {
  return (
    <div className="flex h-screen min-w-[1100px] flex-col overflow-hidden bg-[#2b2b2b] font-['DejaVu_Sans_Condensed',sans-serif] text-[#f4f4f4]">
      <svg width="0" height="0" className="absolute" aria-hidden="true">
        <defs>
          <linearGradient id="tool-gradient"><stop stopColor="#444" /><stop offset="1" stopColor="#eee" /></linearGradient>
          <radialGradient id="vib" cy=".3"><stop stopColor="#333" /><stop offset="1" stopColor="#ccc" /></radialGradient>
        </defs>
      </svg>
      <MenuBar />
      <OptionsBar />
      <div className="flex min-h-0 flex-1 gap-[3px] border-b-2 border-[#111] pt-px pl-px">
        <Toolbox />
        <DocumentWindow />
        <aside className="flex w-[263px] shrink-0 flex-col">
          <div className="flex h-[12px] shrink-0 items-center justify-between bg-[#3a3a3a] pr-[5px] pl-[26px]"><DoubleChevron left /><DoubleChevron /></div>
          <div className="flex min-h-0 flex-1 bg-[#535353]">
            <IconDock />
            <div className="flex min-w-0 flex-1 flex-col border-r border-l-2 border-[#2b2b2b]">
              <ColorPanel />
              <AdjustmentsPanel />
              <LayersPanel />
            </div>
          </div>
        </aside>
      </div>
    </div>
  );
}
